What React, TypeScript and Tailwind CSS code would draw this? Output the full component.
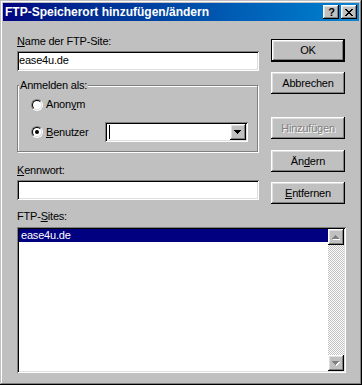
import React from "react";

function Raised({ className, children }: { className: string; children?: React.ReactNode }) {
  return (
    <div
      className={
        "flex items-center justify-center bg-[#c0c0c0] shadow-[inset_-1px_-1px_#000,inset_1px_1px_#fff,inset_-2px_-2px_#808080,inset_2px_2px_#dfdfdf] " +
        className
      }
    >
      {children}
    </div>
  );
}

function CloseX() {
  return (
    <svg width="8" height="7" viewBox="0 0 8 7" shapeRendering="crispEdges">
      <path
        fill="#000"
        d="M0 0h2v1H0zM6 0h2v1H6zM1 1h2v1H1zM5 1h2v1H5zM2 2h4v1H2zM3 3h2v1H3zM2 4h4v1H2zM1 5h2v1H1zM5 5h2v1H5zM0 6h2v1H0zM6 6h2v1H6z"
      />
    </svg>
  );
}

function DownArrow({ disabled }: { disabled?: boolean }) {
  const d = "M0 0h7v1H0zM1 1h5v1H1zM2 2h3v1H2zM3 3h1v1H3z";
  return (
    <svg width="8" height="5" viewBox="0 0 8 5" shapeRendering="crispEdges">
      {disabled && <path fill="#fff" transform="translate(1 1)" d={d} />}
      <path fill={disabled ? "#808080" : "#000"} d={d} />
    </svg>
  );
}

function UpArrow({ disabled }: { disabled?: boolean }) {
  const d = "M3 0h1v1H3zM2 1h3v1H2zM1 2h5v1H1zM0 3h7v1H0z";
  return (
    <svg width="8" height="5" viewBox="0 0 8 5" shapeRendering="crispEdges">
      {disabled && <path fill="#fff" transform="translate(1 1)" d={d} />}
      <path fill={disabled ? "#808080" : "#000"} d={d} />
    </svg>
  );
}

function Radio({ checked }: { checked?: boolean }) {
  return (
    <div className="w-[12px] h-[12px] shrink-0 rounded-full border border-t-[#808080] border-l-[#808080] border-b-white border-r-white">
      <div className="w-[10px] h-[10px] rounded-full border border-t-black border-l-black border-b-[#dfdfdf] border-r-[#dfdfdf] bg-white flex items-center justify-center">
        {checked && <div className="w-[4px] h-[4px] rounded-full bg-black" />}
      </div>
    </div>
  );
}

export default function App() {
  return (
    <div className="w-[362px] h-[385px] bg-[#c0c0c0] p-[3px] shadow-[inset_-1px_-1px_#000,inset_1px_1px_#c0c0c0,inset_-2px_-2px_#808080,inset_2px_2px_#fff] font-['Liberation_Sans',Arial,sans-serif] text-[11px] leading-[13px] text-black select-none flex flex-col">
      {/* Title bar */}
      <div className="h-[18px] shrink-0 flex items-center bg-linear-to-r from-[#000080] to-[#1084d0] pl-[2px] pr-[2px]">
        <span className="flex-1 text-white font-bold text-[12px] leading-[17px] whitespace-nowrap">
          FTP-Speicherort hinzufügen/ändern
        </span>
        <div className="flex gap-[2px]">
          <Raised className="w-[16px] h-[14px]">
            <span className="font-bold text-[11px] leading-[11px] pl-[1px]">?</span>
          </Raised>
          <Raised className="w-[16px] h-[14px]">
            <CloseX />
          </Raised>
        </div>
      </div>

      {/* Body */}
      <div className="pl-[14px] pt-[14px] flex flex-col tracking-[-0.2px]">
        <div className="flex items-start gap-[12px]">
          {/* Left column */}
          <div className="w-[242px] flex flex-col">
            <div className="h-[13px] whitespace-nowrap">
              <u>N</u>ame der FTP-Site:
            </div>
            <div className="mt-[3px] h-[20px] bg-white pl-[2px] pt-[3px] shadow-[inset_1px_1px_#808080,inset_-1px_-1px_#fff,inset_2px_2px_#000,inset_-2px_-2px_#dfdfdf]">
              ease4u.de
            </div>

            <div className="relative mt-[14px] w-[241px] h-[67px] border border-[#808080] shadow-[inset_1px_1px_#fff,1px_1px_#fff] pl-[13px] pt-[12px] flex flex-col">
              <span className="absolute left-[1px] top-[-7px] px-[1px] bg-[#c0c0c0] whitespace-nowrap">
                Anmelden als:
              </span>
              <div className="h-[13px] flex items-center">
                <Radio />
                <span className="ml-[3px]">
                  Anon<u>y</u>m
                </span>
              </div>
              <div className="mt-[11px] h-[20px] flex items-center">
                <div className="w-[74px] flex items-center">
                  <Radio checked />
                  <span className="ml-[3px]">
                    <u>B</u>enutzer
                  </span>
                </div>
                <div className="w-[143px] h-[20px] bg-white p-[2px] flex items-center shadow-[inset_1px_1px_#808080,inset_-1px_-1px_#fff,inset_2px_2px_#000,inset_-2px_-2px_#dfdfdf]">
                  <div className="flex-1 h-full flex items-center pl-[2px]">
                    <div className="w-[1px] h-[14px] bg-black" />
                  </div>
                  <Raised className="w-[16px] h-[16px]">
                    <DownArrow />
                  </Raised>
                </div>
              </div>
            </div>

            <div className="mt-[12px] h-[13px]">
              <u>K</u>ennwort:
            </div>
            <div className="mt-[3px] h-[20px] bg-white shadow-[inset_1px_1px_#808080,inset_-1px_-1px_#fff,inset_2px_2px_#000,inset_-2px_-2px_#dfdfdf]" />
          </div>

          {/* Right column */}
          <div className="pt-[4px] flex flex-col">
            <div className="w-[74px] h-[23px] border border-black">
              <Raised className="w-full h-full">OK</Raised>
            </div>
            <Raised className="mt-[10px] w-[74px] h-[22px]">Abbrechen</Raised>
            <Raised className="mt-[23px] w-[74px] h-[22px]">
              <span className="text-[#808080] [text-shadow:1px_1px_0_#fff]">Hinzufügen</span>
            </Raised>
            <Raised className="mt-[11px] w-[74px] h-[22px]">
              <span>
                Än<u>d</u>ern
              </span>
            </Raised>
            <Raised className="mt-[10px] w-[74px] h-[22px]">
              <span>
                <u>E</u>ntfernen
              </span>
            </Raised>
          </div>
        </div>

        <div className="mt-[6px] h-[13px]">
          FTP-<u>S</u>ites:
        </div>
        <div className="mt-[4px] w-[329px] h-[146px] bg-white p-[2px] flex shadow-[inset_1px_1px_#808080,inset_-1px_-1px_#fff,inset_2px_2px_#000,inset_-2px_-2px_#dfdfdf]">
          <div className="flex-1">
            <div className="h-[13px] bg-[#000080] text-white pl-[2px]">ease4u.de</div>
          </div>
          <div className="w-[16px] h-full flex flex-col">
            <Raised className="w-[16px] h-[16px] shrink-0">
              <UpArrow disabled />
            </Raised>
            <div className="flex-1 bg-[image:repeating-conic-gradient(#c0c0c0_0%_25%,#ffffff_0%_50%)] bg-[length:2px_2px]" />
            <Raised className="w-[16px] h-[16px] shrink-0">
              <DownArrow disabled />
            </Raised>
          </div>
        </div>
      </div>
    </div>
  );
}
